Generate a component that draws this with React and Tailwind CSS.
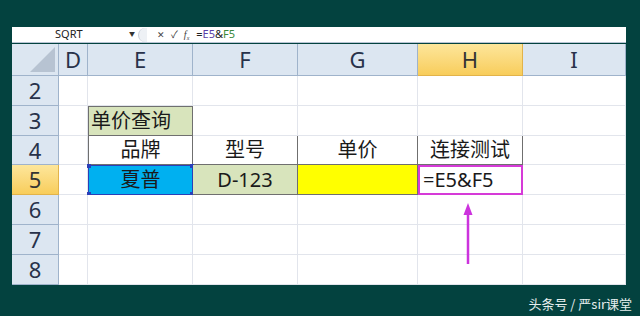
import React from 'react';

const cols = ['D', 'E', 'F', 'G', 'H', 'I'];
const rows = [2, 3, 4, 5, 6, 7, 8];

const font = { fontFamily: '"Noto Sans", "Noto Sans CJK SC", sans-serif' };

function Cell({ r, c }) {
  // default empty gridline cell
  let cls = 'border-r border-b border-[#e2e5ec] bg-white';
  let content = null;

  if (r === 3 && c === 'E') {
    cls = 'bg-[#d8e4bc] border border-[#6f6f6f] justify-start pl-[2px]';
    content = '单价查询';
  }
  if (r === 4 && ['E', 'F', 'G', 'H'].includes(c)) {
    cls = 'bg-white border-r border-b border-[#6f6f6f] justify-center' + (c === 'E' ? ' border-l' : '');
    content = { E: '品牌', F: '型号', G: '单价', H: '连接测试' }[c];
  }
  if (r === 5 && c === 'E') {
    cls = 'bg-[#00b0f0] border border-[#2a3fb8] justify-center';
    content = '夏普';
  }
  if (r === 5 && c === 'F') {
    cls = 'bg-[#d8e4bc] border-r border-b border-[#6f6f6f] justify-center';
    content = 'D-123';
  }
  if (r === 5 && c === 'G') {
    cls = 'bg-[#ffff00] border-r border-b border-[#6f6f6f]';
  }
  if (r === 5 && c === 'H') {
    cls = 'bg-white border-2 border-[#d63ad8] justify-start pl-[3px]';
    content = '=E5&F5';
  }

  return (
    <div className={`relative flex items-center text-[20px] leading-none text-[#1a1a1a] ${cls}`}>
      {content}
      {r === 5 && c === 'E' && (
        <>
          <span className="absolute -left-[2px] -top-[2px] w-[4px] h-[4px] bg-[#2a3fb8]" />
          <span className="absolute -right-[2px] -top-[2px] w-[4px] h-[4px] bg-[#2a3fb8]" />
          <span className="absolute -left-[2px] -bottom-[2px] w-[4px] h-[4px] bg-[#2a3fb8]" />
          <span className="absolute -right-[2px] -bottom-[2px] w-[4px] h-[4px] bg-[#2a3fb8]" />
        </>
      )}
    </div>
  );
}

export default function App() {
  return (
    <div className="relative w-[640px] h-[316px] bg-[#03423f] overflow-hidden" style={font}>
      <div className="ml-[12px] pt-[27px] w-[614px]">
        {/* formula bar */}
        <div className="h-[16px] bg-white flex items-center text-[11px] text-[#222] border-b border-[#b8c4d4]">
          <div className="w-[123px] flex items-center">
            <span className="ml-[43px]">SQRT</span>
            <span className="ml-auto text-[6px] text-[#333]">▼</span>
          </div>
          <div className="ml-[3px] w-[9px] h-[14px] rounded-l-full border-l border-[#c8ced8] bg-[#eef1f5]" />
          <span className="ml-[10px] text-[9px] text-[#444]">✕</span>
          <span className="ml-[6px] text-[10px] text-[#333]">✓</span>
          <span className="ml-[6px] text-[10px] italic text-[#444]" style={{ fontFamily: '"Liberation Serif", serif' }}>f<sub className="text-[6px]">x</sub></span>
          <span className="ml-[7px]">
            =<span className="text-[#5b3fa8]">E5</span>&amp;<span className="text-[#3b8a3b]">F5</span>
          </span>
        </div>

        {/* grid */}
        <div className="mt-[1px] grid grid-cols-[47px_29px_105px_105px_120px_105px_103px] grid-rows-[32px_30px_30px_29px_30px_30px_30px_30px]">
          {/* corner */}
          <div className="bg-[#dce6f1] border-r border-b border-[#9fb3cb] relative overflow-hidden">
            <div className="absolute right-[3px] bottom-[3px] w-0 h-0 border-l-[25px] border-l-transparent border-b-[25px] border-b-[#b7c3d2]" />
          </div>
          {cols.map((c) => (
            <div
              key={c}
              className={`flex items-center justify-center text-[22px] border-r border-b ${
                c === 'H'
                  ? 'bg-gradient-to-b from-[#fde69a] to-[#f8cd5a] border-[#e2b34a] text-[#333]'
                  : 'bg-[#dce6f1] border-[#9fb3cb] text-[#28324a]'
              }`}
            >
              {c}
            </div>
          ))}
          {rows.map((r) => (
            <React.Fragment key={r}>
              <div
                className={`flex items-center justify-center text-[22px] border-r border-b ${
                  r === 5
                    ? 'bg-gradient-to-b from-[#fde69a] to-[#f8cd5a] border-[#e2b34a] text-[#333]'
                    : 'bg-[#dce6f1] border-[#9fb3cb] text-[#28324a]'
                }`}
              >
                {r}
              </div>
              {cols.map((c) => (
                <Cell key={c} r={r} c={c} />
              ))}
            </React.Fragment>
          ))}
        </div>
      </div>

      {/* arrow */}
      <svg className="absolute left-[462px] top-[202px]" width="12" height="64" viewBox="0 0 12 64">
        <line x1="6" y1="62" x2="6" y2="10" stroke="#cc33dd" strokeWidth="2.5" />
        <polygon points="6,1 1.5,13 10.5,13" fill="#cc33dd" />
      </svg>

      {/* watermark */}
      <div className="absolute right-[8px] bottom-[3px] text-[13px] text-[#e6eeee]" style={{ fontFamily: '"Noto Sans CJK SC", sans-serif' }}>
        头条号 / 严sir课堂
      </div>
    </div>
  );
}
